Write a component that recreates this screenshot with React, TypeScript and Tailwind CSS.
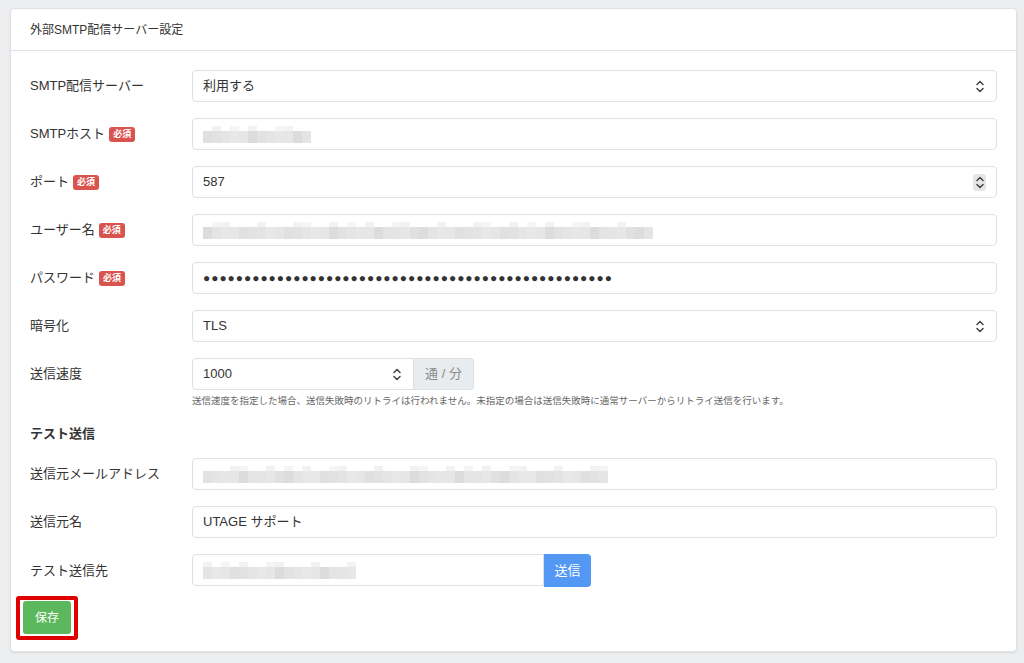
import React from 'react';

const FONT = { fontFamily: '"Helvetica Neue", "Liberation Sans", "Noto Sans CJK JP", sans-serif' };

// pixelated (mosaic) blocks used to hide private values
const Mosaic: React.FC<{ top: string[]; main: string[]; w: number }> = ({ top, main, w }) => (
  <div className="flex flex-col">
    <div className="flex h-[5px]">
      {top.map((c, i) => (
        <div key={i} className="h-full" style={{ width: w, background: c }} />
      ))}
    </div>
    <div className="flex h-[12px]">
      {main.map((c, i) => (
        <div key={i} className="h-full" style={{ width: w, background: c }} />
      ))}
    </div>
  </div>
);

const Required = () => (
  <span className="ml-1 inline-flex h-[15px] items-center rounded-[3px] bg-[#d9534f] px-[4px] text-[9px] font-bold leading-none text-white">必須</span>
);

const UpDown: React.FC<{ boxed?: boolean }> = ({ boxed }) => (
  <span className={`flex h-[17px] w-[13px] items-center justify-center rounded-[3px] ${boxed ? 'bg-[#e6e6e6]' : ''}`}>
    <svg width="8" height="13" viewBox="0 0 8 13" fill="none" stroke="#444" strokeWidth="1.5" strokeLinecap="round" strokeLinejoin="round">
      <path d="M1 4.5 L4 1.5 L7 4.5" />
      <path d="M1 8.5 L4 11.5 L7 8.5" />
    </svg>
  </span>
);

const inputBase = 'h-[32px] rounded-[4px] border border-[#dcdfe3] bg-white flex items-center px-[10px] text-[13px] text-[#333]';

const Row: React.FC<{ label: string; required?: boolean; children: React.ReactNode }> = ({ label, required, children }) => (
  <div className="flex items-center">
    <div className="flex w-[162px] shrink-0 items-center text-[13px] text-[#333]">
      {label}
      {required && <Required />}
    </div>
    <div className="min-w-0 flex-1">{children}</div>
  </div>
);

const App: React.FC = () => {
  const g = ['#e6e6e6', '#e2e2e2', '#e8e8e8', '#e0e0e0', '#e4e4e4', '#e7e7e7', '#dcdcdc', '#e5e5e5'];
  const pick = (n: number, seed: number) => Array.from({ length: n }, (_, i) => g[(i * 5 + seed * 3 + (i % 3)) % g.length]);
  const pickTop = (n: number, seed: number) =>
    Array.from({ length: n }, (_, i) => ((i * 7 + seed) % 4 === 0 ? '#f2f2f2' : (i * 3 + seed) % 5 === 0 ? '#f5f5f5' : 'transparent'));

  return (
    <div className="min-h-screen bg-[#ebedef] pl-[10px] pr-[7px] pt-[8px] pb-[10px]" style={FONT}>
      <div className="rounded-[4px] border border-[#dfe1e5] bg-white shadow-[0_1px_2px_rgba(0,0,0,0.08)]">
        <div className="flex h-[42px] items-center border-b border-[#dfe1e5] px-[19px] text-[12px] text-[#333]">
          外部SMTP配信サーバー設定
        </div>
        <div className="px-[19px] pt-[19px] pb-[11px]">
          <div className="flex flex-col gap-[16px]">
            <Row label="SMTP配信サーバー">
              <div className={`${inputBase} justify-between`}>
                <span>利用する</span>
                <UpDown />
              </div>
            </Row>
            <Row label="SMTPホスト" required>
              <div className={inputBase}>
                <Mosaic w={9} top={pickTop(12, 1)} main={pick(12, 1)} />
              </div>
            </Row>
            <Row label="ポート" required>
              <div className={`${inputBase} justify-between`}>
                <span>587</span>
                <UpDown boxed />
              </div>
            </Row>
            <Row label="ユーザー名" required>
              <div className={inputBase}>
                <Mosaic w={9} top={pickTop(50, 2)} main={pick(50, 2)} />
              </div>
            </Row>
            <Row label="パスワード" required>
              <div className={inputBase}>
                <span className="text-[12px] tracking-[0.95px] text-[#333]">{'●'.repeat(50)}</span>
              </div>
            </Row>
            <Row label="暗号化">
              <div className={`${inputBase} justify-between`}>
                <span>TLS</span>
                <UpDown />
              </div>
            </Row>
            <div>
              <Row label="送信速度">
                <div className="flex">
                  <div className={`${inputBase} w-[222px] justify-between rounded-r-none`}>
                    <span>1000</span>
                    <UpDown />
                  </div>
                  <div className="flex h-[32px] w-[60px] items-center justify-center rounded-r-[4px] border border-l-0 border-[#dcdfe3] bg-[#e9ecef] text-[13px] text-[#8a8a8a]">
                    通 / 分
                  </div>
                </div>
              </Row>
              <div className="mt-[4px] pl-[162px] text-[9.5px] leading-[14px] text-[#666]">
                送信速度を指定した場合、送信失敗時のリトライは行われません。未指定の場合は送信失敗時に通常サーバーからリトライ送信を行います。
              </div>
            </div>
          </div>

          <div className="mt-[16px] mb-[14px] text-[13px] font-bold leading-[20px] text-[#333]">テスト送信</div>

          <div className="flex flex-col gap-[16px]">
            <Row label="送信元メールアドレス">
              <div className={inputBase}>
                <Mosaic w={9} top={pickTop(45, 3)} main={pick(45, 3)} />
              </div>
            </Row>
            <Row label="送信元名">
              <div className={inputBase}>
                <span>UTAGE サポート</span>
              </div>
            </Row>
            <Row label="テスト送信先">
              <div className="flex">
                <div className={`${inputBase} w-[352px] rounded-r-none`}>
                  <Mosaic w={9} top={pickTop(17, 4)} main={pick(17, 4)} />
                </div>
                <button className="h-[33px] w-[47px] rounded-r-[4px] bg-[#5398f4] text-[13px] text-white">送信</button>
              </div>
            </Row>
          </div>

          <div className="mt-[9px] ml-[-14px] inline-block rounded-[3px] border-[4px] border-[#e00000] bg-white px-[3px] pt-[1px] pb-[2px]">
            <button className="flex h-[33px] w-[48px] items-center justify-center rounded-[3px] bg-[#5cb85c] text-[12px] text-white">保存</button>
          </div>
        </div>
      </div>
    </div>
  );
};

export default App;
